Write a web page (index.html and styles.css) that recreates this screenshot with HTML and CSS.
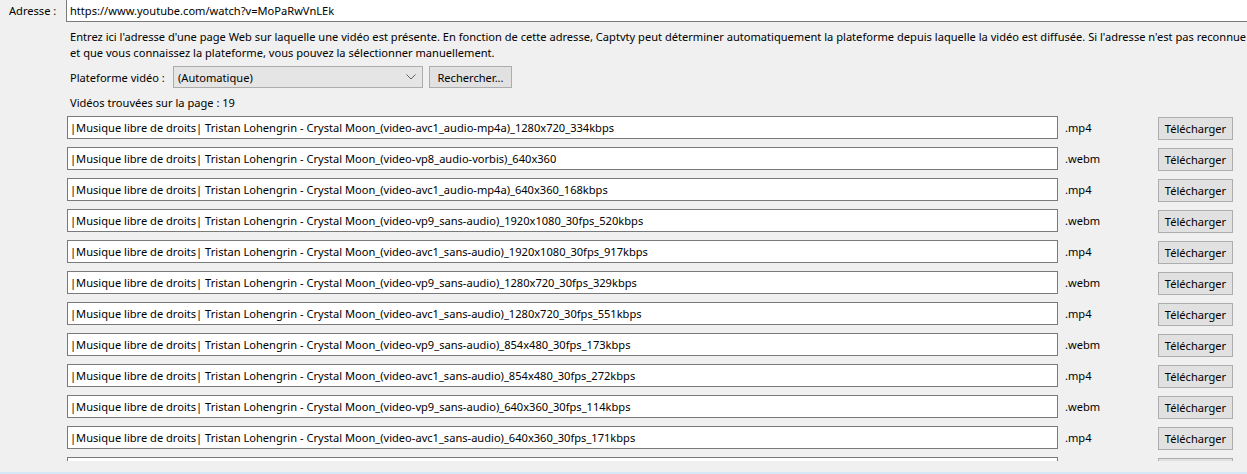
FILE: index.html
```html
<!DOCTYPE html>
<html lang="fr">
<head>
    <meta charset="UTF-8">
    <meta name="viewport" content="width=device-width, initial-scale=1.0">
    <title>Captvty - Adresse</title>
    <link rel="stylesheet" href="styles.css">
</head>
<body>
    <div class="window">
        <div class="address-row">
            <label class="field-label">Adresse :</label>
            <div class="textbox address-box">https://www.youtube.com/watch?v=MoPaRwVnLEk</div>
        </div>

        <div class="content">
            <p class="hint">Entrez ici l'adresse d'une page Web sur laquelle une vidéo est présente. En fonction de cette adresse, Captvty peut déterminer automatiquement la plateforme depuis laquelle la vidéo est diffusée. Si l'adresse n'est pas reconnue<br>et que vous connaissez la plateforme, vous pouvez la sélectionner manuellement.</p>

            <div class="platform-row">
                <span class="platform-label">Plateforme vidéo :</span>
                <div class="combo">
                    <span>(Automatique)</span>
                    <svg class="combo-arrow" width="10" height="6" viewBox="0 0 10 6">
                        <path d="M0.5 0.5 L5 5 L9.5 0.5" fill="none" stroke="#606060" stroke-width="1"/>
                    </svg>
                </div>
                <button class="btn search-btn">Rechercher...</button>
            </div>

            <p class="found">Vidéos trouvées sur la page : 19</p>
        </div>

        <div class="video-list">
            <div class="video-row">
                <div class="textbox">|Musique libre de droits| Tristan Lohengrin - Crystal Moon_(video-avc1_audio-mp4a)_1280x720_334kbps</div>
                <span class="ext">.mp4</span>
                <button class="btn">Télécharger</button>
            </div>
            <div class="video-row">
                <div class="textbox">|Musique libre de droits| Tristan Lohengrin - Crystal Moon_(video-vp8_audio-vorbis)_640x360</div>
                <span class="ext">.webm</span>
                <button class="btn">Télécharger</button>
            </div>
            <div class="video-row">
                <div class="textbox">|Musique libre de droits| Tristan Lohengrin - Crystal Moon_(video-avc1_audio-mp4a)_640x360_168kbps</div>
                <span class="ext">.mp4</span>
                <button class="btn">Télécharger</button>
            </div>
            <div class="video-row">
                <div class="textbox">|Musique libre de droits| Tristan Lohengrin - Crystal Moon_(video-vp9_sans-audio)_1920x1080_30fps_520kbps</div>
                <span class="ext">.webm</span>
                <button class="btn">Télécharger</button>
            </div>
            <div class="video-row">
                <div class="textbox">|Musique libre de droits| Tristan Lohengrin - Crystal Moon_(video-avc1_sans-audio)_1920x1080_30fps_917kbps</div>
                <span class="ext">.mp4</span>
                <button class="btn">Télécharger</button>
            </div>
            <div class="video-row">
                <div class="textbox">|Musique libre de droits| Tristan Lohengrin - Crystal Moon_(video-vp9_sans-audio)_1280x720_30fps_329kbps</div>
                <span class="ext">.webm</span>
                <button class="btn">Télécharger</button>
            </div>
            <div class="video-row">
                <div class="textbox">|Musique libre de droits| Tristan Lohengrin - Crystal Moon_(video-avc1_sans-audio)_1280x720_30fps_551kbps</div>
                <span class="ext">.mp4</span>
                <button class="btn">Télécharger</button>
            </div>
            <div class="video-row">
                <div class="textbox">|Musique libre de droits| Tristan Lohengrin - Crystal Moon_(video-vp9_sans-audio)_854x480_30fps_173kbps</div>
                <span class="ext">.webm</span>
                <button class="btn">Télécharger</button>
            </div>
            <div class="video-row">
                <div class="textbox">|Musique libre de droits| Tristan Lohengrin - Crystal Moon_(video-avc1_sans-audio)_854x480_30fps_272kbps</div>
                <span class="ext">.mp4</span>
                <button class="btn">Télécharger</button>
            </div>
            <div class="video-row">
                <div class="textbox">|Musique libre de droits| Tristan Lohengrin - Crystal Moon_(video-vp9_sans-audio)_640x360_30fps_114kbps</div>
                <span class="ext">.webm</span>
                <button class="btn">Télécharger</button>
            </div>
            <div class="video-row">
                <div class="textbox">|Musique libre de droits| Tristan Lohengrin - Crystal Moon_(video-avc1_sans-audio)_640x360_30fps_171kbps</div>
                <span class="ext">.mp4</span>
                <button class="btn">Télécharger</button>
            </div>
            <div class="video-row">
                <div class="textbox"></div>
                <span class="ext"></span>
                <button class="btn"></button>
            </div>
        </div>

        <div class="status-edge"></div>
    </div>
</body>
</html>
```

FILE: styles.css
```css
body {
    margin: 0;
    font-family: "Noto Sans", "Open Sans", sans-serif;
    font-size: 11.1px;
    color: #000;
    background: #f0f0f0;
    overflow: hidden;
}

.window {
    width: 1247px;
    height: 474px;
    display: flex;
    flex-direction: column;
    overflow: hidden;
}

.textbox {
    box-sizing: border-box;
    height: 23px;
    line-height: 21px;
    padding: 0 2px;
    background: #fff;
    border: 1px solid #7a7a7a;
    white-space: nowrap;
    overflow: hidden;
}

.address-row {
    display: flex;
    align-items: center;
    margin-top: -1px;
    height: 23px;
    flex-shrink: 0;
}

.field-label {
    width: 66px;
    flex-shrink: 0;
    padding-left: 9px;
    box-sizing: border-box;
    white-space: nowrap;
}

.address-box {
    width: 1300px;
    flex-shrink: 0;
    padding-left: 3px;
}

.content {
    padding-left: 70px;
    flex-shrink: 0;
}

.hint {
    margin: 7px 0 0;
    line-height: 16px;
    white-space: nowrap;
}

.platform-row {
    display: flex;
    align-items: center;
    margin-top: 5px;
    height: 22px;
}

.platform-label {
    width: 103px;
    white-space: nowrap;
}

.combo {
    box-sizing: border-box;
    width: 250px;
    height: 22px;
    display: flex;
    align-items: center;
    justify-content: space-between;
    padding: 0 6px 0 4px;
    background: #e5e5e5;
    border: 1px solid #acacac;
}

.combo-arrow {
    display: block;
}

.btn {
    box-sizing: border-box;
    height: 23px;
    padding: 0;
    font-family: inherit;
    font-size: inherit;
    color: #000;
    background: #e1e1e1;
    border: 1px solid #adadad;
}

.search-btn {
    width: 83px;
    height: 22px;
    margin-left: 6px;
}

.found {
    margin: 7px 0 0;
    line-height: 16px;
}

.video-list {
    margin-top: 4px;
    padding-left: 67px;
    height: 346px;
    flex-shrink: 0;
    overflow: hidden;
    display: flex;
    flex-direction: column;
    gap: 8px;
}

.video-row {
    display: grid;
    grid-template-columns: 991px 100px 75px;
    align-items: center;
    height: 23px;
    flex-shrink: 0;
}

.ext {
    padding-left: 7px;
}

.video-row .btn {
    margin-top: 2px;
}

.status-edge {
    margin-top: auto;
    height: 2px;
    background: #d4e8f8;
}
```
